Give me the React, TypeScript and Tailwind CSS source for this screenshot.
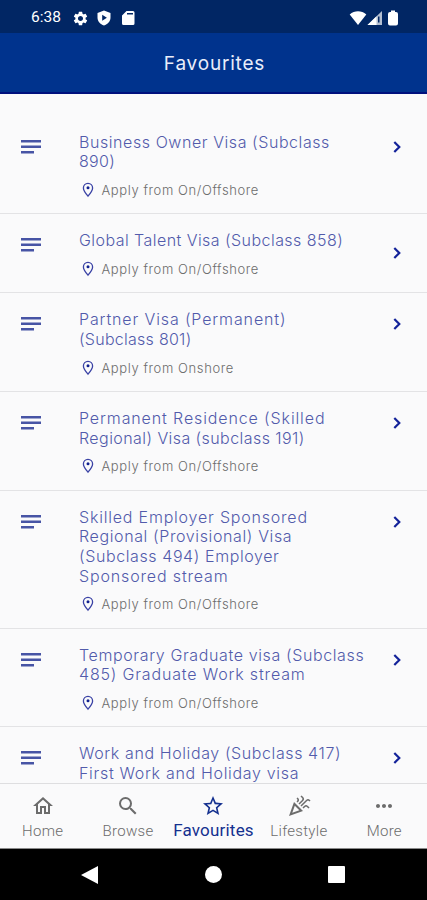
import React from 'react';
import {
  MdMoreHoriz,
  MdOutlineCelebration,
  MdOutlineHome,
  MdSearch,
  MdSettings,
  MdStarBorder,
} from 'react-icons/md';

interface TitleLine {
  text: string;
  tracking: string;
}

interface Visa {
  lines: TitleLine[];
  location: string;
  centred?: boolean;
}

const visas: Visa[] = [
  {
    lines: [
      { text: 'Business Owner Visa (Subclass', tracking: 'tracking-[0.57px]' },
      { text: '890)', tracking: 'tracking-[0.3px]' },
    ],
    location: 'Apply from On/Offshore',
  },
  {
    lines: [{ text: 'Global Talent Visa (Subclass 858)', tracking: 'tracking-[0.45px]' }],
    location: 'Apply from On/Offshore',
    centred: true,
  },
  {
    lines: [
      { text: 'Partner Visa (Permanent)', tracking: 'tracking-[0.87px]' },
      { text: '(Subclass 801)', tracking: 'tracking-[0.27px]' },
    ],
    location: 'Apply from Onshore',
  },
  {
    lines: [
      { text: 'Permanent Residence (Skilled', tracking: 'tracking-[0.88px]' },
      { text: 'Regional) Visa (subclass 191)', tracking: 'tracking-[0.43px]' },
    ],
    location: 'Apply from On/Offshore',
  },
  {
    lines: [
      { text: 'Skilled Employer Sponsored', tracking: 'tracking-[0.8px]' },
      { text: 'Regional (Provisional) Visa', tracking: 'tracking-[0.62px]' },
      { text: '(Subclass 494) Employer', tracking: 'tracking-[0.6px]' },
      { text: 'Sponsored stream', tracking: 'tracking-[0.85px]' },
    ],
    location: 'Apply from On/Offshore',
  },
  {
    lines: [
      { text: 'Temporary Graduate visa (Subclass', tracking: 'tracking-[0.62px]' },
      { text: '485) Graduate Work stream', tracking: 'tracking-[0.83px]' },
    ],
    location: 'Apply from On/Offshore',
  },
  {
    lines: [
      { text: 'Work and Holiday (Subclass 417)', tracking: 'tracking-[0.6px]' },
      { text: 'First Work and Holiday visa', tracking: 'tracking-[0.68px]' },
    ],
    location: '',
  },
];

const tabs = [
  { label: 'Home', icon: MdOutlineHome, active: false },
  { label: 'Browse', icon: MdSearch, active: false },
  { label: 'Favourites', icon: MdStarBorder, active: true },
  { label: 'Lifestyle', icon: MdOutlineCelebration, active: false },
  { label: 'More', icon: MdMoreHoriz, active: false },
];

const StatusBar: React.FC = () => (
  <div className="flex h-[33px] shrink-0 items-center justify-between bg-[#012664] pt-[3px] pr-[29px] pl-[31px] text-white">
    <div className="flex items-center">
      <span className="w-[41px] [font-family:Roboto,sans-serif] text-[15.5px] leading-none">6:38</span>
      <MdSettings className="size-[17px]" />
      {/* Shield with play mark */}
      <svg viewBox="0 0 16 16" className="ml-[7px] size-[16px]" fill="currentColor">
        <path fillRule="evenodd" d="M8 .5 14.5 3v4.5c0 4-2.800 6.800-6.500 8-3.700-1.200-6.500-4-6.500-8V3zM6.200 4.700v6l4.700-3z" />
      </svg>
      {/* SD card */}
      <svg viewBox="0 0 14 16" className="ml-[9px] h-[16px] w-[14px]" fill="currentColor">
        <path fillRule="evenodd" d="M5.500 1H12q1.500 0 1.500 1.500v11Q13.500 15 12 15H2.500Q1 15 1 13.500v-8zM6 3v1.500h6V3z" />
      </svg>
    </div>
    <div className="flex items-center">
      <svg viewBox="0 0 18 16" className="h-[16px] w-[18px]" fill="currentColor">
        <path d="M9 15 .7 4.500C5.500.3 12.500.3 17.300 4.500z" />
      </svg>
      <svg viewBox="0 0 16 16" className="h-[16px] w-[16px]" fill="currentColor">
        <path d="M.5 15 15 1v14z" opacity=".7" />
        <path d="M.5 15 9.500 6.300V15z" />
        <path d="M11 6.500h1.500v6H11z" fill="#012664" />
      </svg>
      <svg viewBox="0 0 10 16" className="ml-[5px] h-[16px] w-[10px]" fill="currentColor">
        <path d="M3 .5h4V2h1q2 0 2 2v9.500q0 2-2 2H2q-2 0-2-2V4q0-2 2-2h1z" />
      </svg>
    </div>
  </div>
);

const PinIcon: React.FC = () => (
  <svg viewBox="0 0 12 16" className="h-[16px] w-[12px]" fill="none">
    <path d="M6 14.200C3.200 10.800 1.400 8.400 1.400 5.900a4.600 4.600 0 0 1 9.200 0c0 2.500-1.800 4.900-4.600 8.300z" stroke="#3a42a5" strokeWidth="1.300" />
    <circle cx="6" cy="5.800" r="1.500" fill="#10208f" />
  </svg>
);

const VisaRow: React.FC<{ visa: Visa }> = ({ visa }) => (
  <div className="flex items-start border-b border-[#e3e3e5] pt-[17px] pb-[15.500px] pl-[21px]">
    <svg viewBox="0 0 20 15" className="mt-[7px] h-[15px] w-[20px] shrink-0" fill="#4754a5">
      <path d="M0 0h20v2.500H0zM0 5.500h20V8H0zM0 11h13v2.500H0z" />
    </svg>
    <div className="ml-[38px] w-[300px] shrink-0">
      <h2 className="[font-family:Inter,sans-serif] text-[16px] leading-[19.600px] font-light text-[#525bab]">
        {visa.lines.map((line) => (
          <span key={line.text} className={`block whitespace-nowrap ${line.tracking}`}>
            {line.text}
          </span>
        ))}
      </h2>
      <div className="mt-[10px] flex h-[16px] items-center pl-[2.500px]">
        <PinIcon />
        <span className="ml-[8px] [font-family:Inter,sans-serif] text-[13px] leading-4 font-light tracking-[0.6px] whitespace-nowrap text-[#6c6c6c]">
          {visa.location}
        </span>
      </div>
    </div>
    <svg
      viewBox="0 0 24 24"
      className={`ml-[6px] size-[24px] shrink-0 ${visa.centred ? 'mt-[10px]' : 'mt-[2px]'}`}
      fill="none"
      stroke="#14239a"
      strokeWidth="2.200"
    >
      <path d="m9.300 7 5 5-5 5" />
    </svg>
  </div>
);

const App: React.FC = () => (
  <div className="flex h-[900px] w-[427px] flex-col overflow-hidden bg-[#fafafb]">
    <StatusBar />
    <header className="flex h-[61px] shrink-0 items-center justify-center border-b-2 border-[#00107d] bg-[#00338d] pt-[4px] pl-[2px]">
      <h1 className="[font-family:Inter,sans-serif] text-[19px] font-normal tracking-[0.8px] text-[#e9edfa]">
        Favourites
      </h1>
    </header>

    <main className="min-h-0 flex-1 overflow-hidden pt-[21.600px]">
      {visas.map((visa) => (
        <VisaRow key={visa.lines[0].text} visa={visa} />
      ))}
    </main>

    <nav className="grid h-[66px] shrink-0 grid-cols-5 border-t border-b border-t-[#dedee0] border-b-[#8a8a8a] bg-[#fafafb] [font-family:Roboto,sans-serif]">
      {tabs.map(({ label, icon: Icon, active }) => (
        <div
          key={label}
          className={`flex flex-col items-center pt-[10px] ${active ? 'text-[#14308f]' : 'text-[#6c6c6c]'}`}
        >
          <Icon className="size-[24px]" />
          <span
            className={`whitespace-nowrap ${active ? 'text-[17px] leading-[24px] tracking-[0.2px]' : 'text-[15px] leading-[26px] font-light tracking-[0.3px]'}`}
          >
            {label}
          </span>
        </div>
      ))}
    </nav>

    {/* Android navigation buttons */}
    <div className="flex h-[51px] shrink-0 items-center bg-black pl-[81px]">
      <svg viewBox="0 0 17 18" className="h-[18px] w-[17px]" fill="#fff">
        <path d="M0 9 17 0v18z" />
      </svg>
      <div className="ml-[107px] size-[17px] rounded-full bg-white" />
      <div className="ml-[106px] size-[17px] rounded-[1px] bg-white" />
    </div>
  </div>
);

export default App;
